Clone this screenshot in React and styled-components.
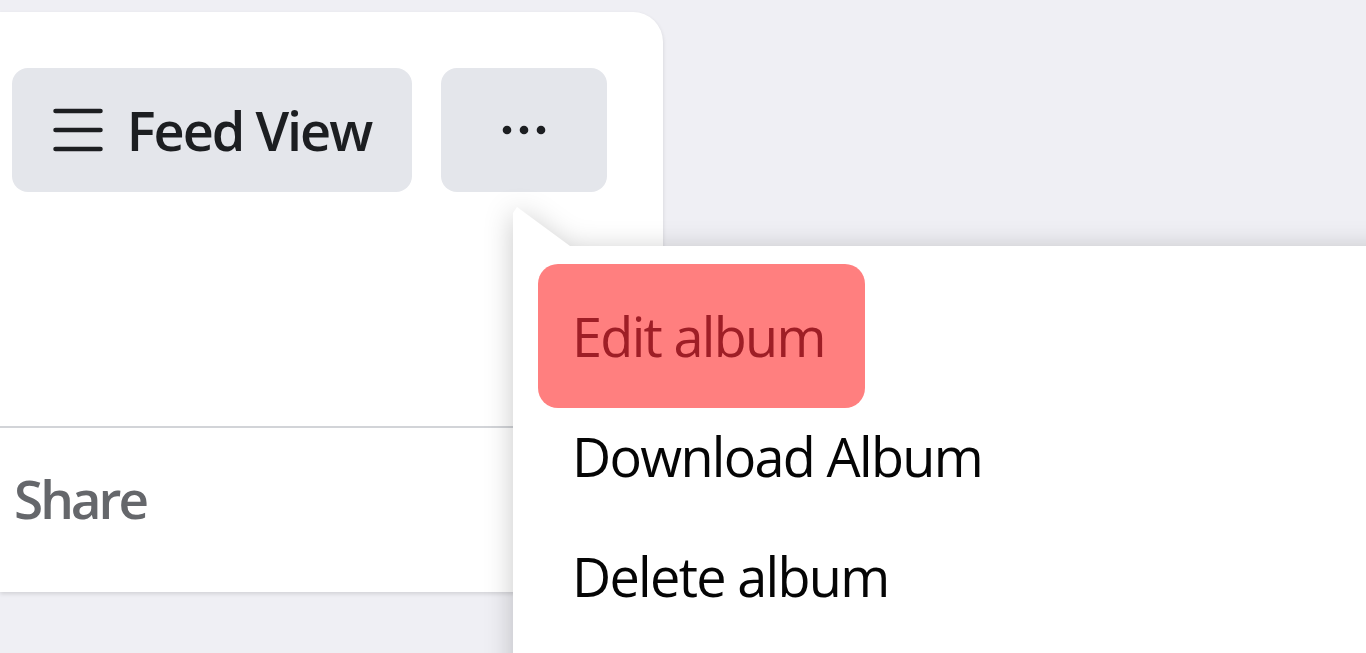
import styled, { createGlobalStyle } from "styled-components";

const GlobalStyle = createGlobalStyle`
  html, body {
    margin: 0;
    padding: 0;
    background: #efeff4;
    overflow: hidden;
  }
  body {
    font-family: "Open Sans", "Noto Sans", sans-serif;
    color: #050505;
  }
`

const Page = styled.div`
  position: relative;
  width: 1366px;
  height: 653px;
  overflow: hidden;
  padding-top: 12px;
  box-sizing: border-box;
`

const Card = styled.section`
  width: 663px;
  height: 580px;
  background: #fff;
  border-radius: 0 30px 0 0;
  box-shadow: 0 2px 4px rgba(0, 0, 0, 0.12);
  display: flex;
  flex-direction: column;
`

const Header = styled.div`
  display: flex;
  gap: 29px;
  padding: 56px 0 0 12px;
  height: 416px;
  flex-shrink: 0;
  box-sizing: border-box;
  border-bottom: 2px solid #d2d4d8;
`

const GreyButton = styled.button`
  height: 124px;
  width: ${p => p.$w}px;
  border: none;
  border-radius: 16px;
  background: #e4e6eb;
  display: flex;
  align-items: center;
  justify-content: center;
  gap: 24px;
  padding: 0;
  font-family: inherit;
  font-size: 54px;
  font-weight: 600;
  color: #1c1e21;
  letter-spacing: -2px;
`

const Footer = styled.div`
  flex: 1;
  display: flex;
  align-items: center;
  padding: 0 0 24px 14px;
  font-size: 53px;
  font-weight: 600;
  color: #65676b;
  letter-spacing: -3px;
`

const Menu = styled.div`
  position: absolute;
  left: 513px;
  top: 207px;
  filter: drop-shadow(0 4px 14px rgba(0, 0, 0, 0.22));
`

const Arrow = styled.div`
  width: 57px;
  height: 39px;
  background: #fff;
  clip-path: polygon(0 6px, 4px 0, 100% 100%, 0 100%);
`

const MenuBox = styled.div`
  width: 900px;
  height: 460px;
  background: #fff;
  padding: 18px 0 0 25px;
  box-sizing: border-box;
  display: flex;
  flex-direction: column;
  align-items: flex-start;
`

const Item = styled.div`
  height: ${p => (p.$hl ? 144 : 120)}px;
  margin-bottom: ${p => (p.$hl ? -12 : 0)}px;
  display: flex;
  align-items: center;
  padding: 0 40px 0 34px;
  border-radius: 20px;
  background: ${p => (p.$hl ? "#ff7f7f" : "transparent")};
  color: ${p => (p.$hl ? "#9e1e26" : "#050505")};
  font-size: 54px;
  font-weight: 400;
  letter-spacing: -1.7px;
`

function Hamburger() {
  return (
    <svg width="50" height="44" viewBox="0 0 50 44">
      <g stroke="#1c1e21" strokeWidth="4.5" strokeLinecap="round">
        <line x1="2.5" y1="3" x2="47.5" y2="3" />
        <line x1="2.5" y1="22" x2="47.5" y2="22" />
        <line x1="2.5" y1="41" x2="47.5" y2="41" />
      </g>
    </svg>
  )
}

function Dots() {
  return (
    <svg width="44" height="10" viewBox="0 0 44 10">
      <g fill="#1c1e21">
        <circle cx="5" cy="5" r="4.3" />
        <circle cx="22" cy="5" r="4.3" />
        <circle cx="39" cy="5" r="4.3" />
      </g>
    </svg>
  )
}

export default function App() {
  return (
    <Page>
      <GlobalStyle />
      <Card>
        <Header>
          <GreyButton $w={400}>
            <Hamburger />
            <span>Feed View</span>
          </GreyButton>
          <GreyButton $w={166}>
            <Dots />
          </GreyButton>
        </Header>
        <Footer>Share</Footer>
      </Card>
      <Menu>
        <Arrow />
        <MenuBox>
          <Item $hl>Edit album</Item>
          <Item>Download Album</Item>
          <Item>Delete album</Item>
        </MenuBox>
      </Menu>
    </Page>
  )
}
